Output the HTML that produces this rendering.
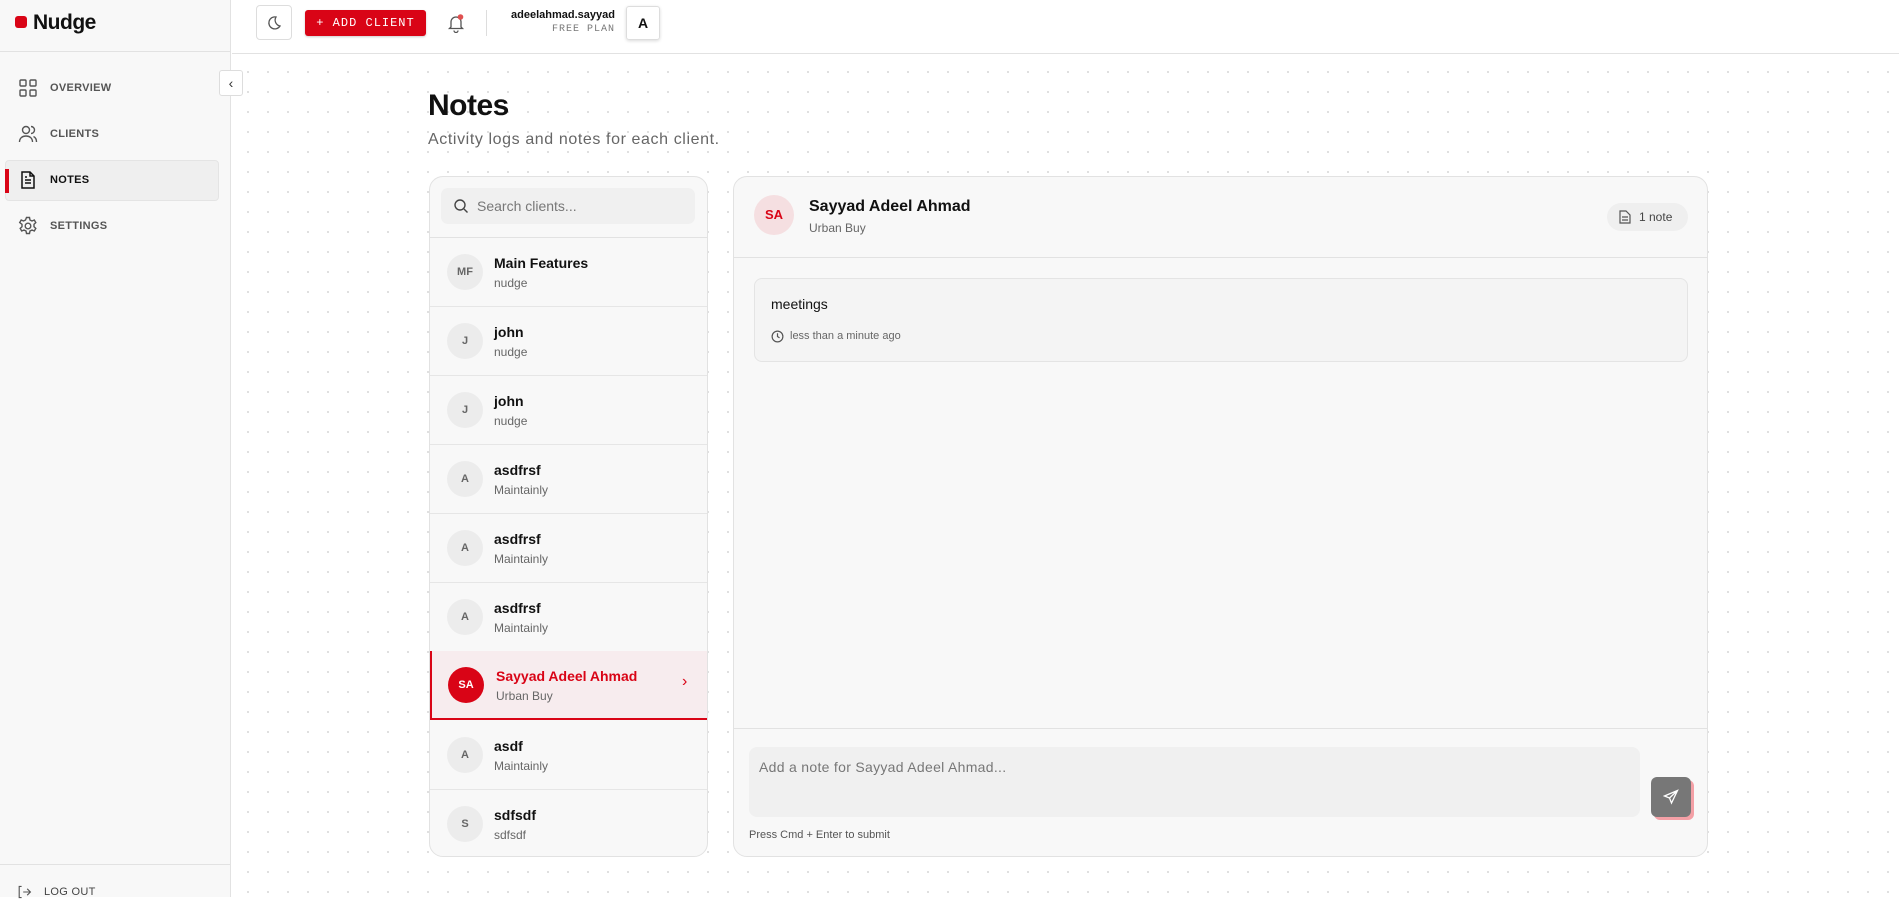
<!DOCTYPE html>
<html><head><meta charset="utf-8"><style>
*{box-sizing:border-box;margin:0;padding:0}
body{width:1899px;height:897px;overflow:hidden;font-family:"Liberation Sans",sans-serif;background:#fff;position:relative;color:#111}
.side{position:absolute;left:0;top:0;width:231px;height:897px;background:#f8f8f8;border-right:1px solid #e2e2e2}
.logo{position:absolute;left:15px;top:11px;font-size:21px;font-weight:bold;letter-spacing:-0.5px}
.logo i{display:inline-block;width:12px;height:12px;border-radius:3px;background:#d90416;margin-right:6px;vertical-align:1px}
.sdiv{position:absolute;left:0;width:231px;height:1px;background:#e2e2e2}
.nav{position:absolute;left:18px;font-size:11px;font-weight:bold;color:#555;letter-spacing:.3px;display:flex;align-items:center;gap:12px}
.nav svg{width:20px;height:20px}
.active{position:absolute;left:5px;top:160px;width:214px;height:41px;background:#efefef;border:1px solid #e4e4e4;border-radius:4px}
.active:before{content:"";position:absolute;left:-1px;top:8px;width:4px;height:24px;background:#d90416}
.main{position:absolute;left:232px;top:54px;right:0;bottom:0;background-color:#fff;background-image:radial-gradient(#d8d8d8 0.9px,transparent 1.1px);background-size:20px 20px;background-position:6px 8px}
.top{position:absolute;left:232px;top:0;right:0;height:54px;background:#fff;border-bottom:1px solid #e2e2e2}
.coll{position:absolute;left:219px;top:70px;width:24px;height:26px;background:#fff;border:1px solid #ddd;border-radius:3px;font-size:14px;text-align:center;line-height:24px;color:#333}
.panel{position:absolute;top:176px;height:681px;background:#f8f8f8;border:1px solid #e2e2e2;border-radius:14px;overflow:hidden}
.row{position:absolute;left:0;width:278px;height:69px;border-bottom:1px solid #e6e6e6}
.av{position:absolute;left:17px;top:16px;width:36px;height:36px;border-radius:50%;background:#ececec;color:#666;font-size:11px;font-weight:bold;text-align:center;line-height:36px}
.nm{position:absolute;left:64px;top:17px;font-size:14px;font-weight:bold}
.sb{position:absolute;left:64px;top:38px;font-size:12px;color:#666}
</style></head><body>
<div class="side">
<div class="logo"><i></i>Nudge</div>
<div class="sdiv" style="top:51px"></div>
<div class="active"></div>
<div class="nav" style="top:78px"><svg viewBox="0 0 20 20" fill="none" stroke="#555" stroke-width="1.4"><rect x="2" y="2" width="6" height="6" rx="1"/><rect x="12" y="2" width="6" height="6" rx="1"/><rect x="2" y="12" width="6" height="6" rx="1"/><rect x="12" y="12" width="6" height="6" rx="1"/></svg>OVERVIEW</div>
<div class="nav" style="top:124px"><svg viewBox="0 0 20 20" fill="none" stroke="#555" stroke-width="1.4"><circle cx="8" cy="6" r="3.5"/><path d="M1.5 18c0-4 3-6 6.5-6s6.5 2 6.5 6M13 2.5a3.5 3.5 0 010 7M15.5 12.5c2 1 3 3 3 5.5"/></svg>CLIENTS</div>
<div class="nav" style="top:170px;color:#111"><svg viewBox="0 0 20 20" fill="none" stroke="#111" stroke-width="1.5"><path d="M4 2h8l4 4v12H4z"/><path d="M12 2v4h4M7 10h6M7 13h6M7 7h2"/></svg>NOTES</div>
<div class="nav" style="top:216px"><svg viewBox="0 0 20 20" fill="none" stroke="#555" stroke-width="1.4"><circle cx="10" cy="10" r="2.8"/><path d="M8.5 1.5h3l.5 2.5 2 1 2.3-1 1.5 2.6-1.8 1.7v2.4l1.8 1.7-1.5 2.6-2.3-1-2 1-.5 2.5h-3l-.5-2.5-2-1-2.3 1-1.5-2.6 1.8-1.7V8.3L1.7 6.6l1.5-2.6 2.3 1 2-1z"/></svg>SETTINGS</div>
<div class="sdiv" style="top:864px"></div>
<div class="nav" style="top:884px;left:16px;font-weight:normal;color:#444"><svg viewBox="0 0 20 20" fill="none" stroke="#555" stroke-width="1.4" style="width:16px;height:16px"><path d="M7 3H4v14h3M9 10h9M14 6l4 4-4 4"/></svg>LOG OUT</div>
</div>
<div class="top">
<div style="position:absolute;left:24px;top:5px;width:36px;height:35px;border:1px solid #ddd;border-radius:4px;display:flex;align-items:center;justify-content:center"><svg width="16" height="16" viewBox="0 0 16 16" fill="none" stroke="#555" stroke-width="1.3"><path d="M10 2a6 6 0 104 9A6 6 0 0110 2z"/></svg></div>
<div style="position:absolute;left:73px;top:10px;width:121px;height:26px;background:#d90416;border-radius:3px;color:#fff;font-family:'Liberation Mono',monospace;font-size:12px;letter-spacing:1px;text-align:center;line-height:26px;box-shadow:0 1px 2px rgba(0,0,0,.2)">+ ADD CLIENT</div>
<svg style="position:absolute;left:215px;top:13px" width="18" height="20" viewBox="0 0 18 20" fill="none" stroke="#555" stroke-width="1.3"><path d="M4 14V9a5 5 0 0110 0v5l1.5 1.5h-13zM7 17.5a2 2 0 004 0"/><circle cx="13.5" cy="4" r="2.8" fill="#e05050" stroke="none"/></svg>
<div style="position:absolute;left:254px;top:10px;width:1px;height:26px;background:#ddd"></div>
<div style="position:absolute;right:1284px;top:9px;text-align:right"><div style="font-size:11px;font-weight:bold">adeelahmad.sayyad</div><div style="font-family:'Liberation Mono',monospace;font-size:10px;color:#777;letter-spacing:1px;margin-top:3px">FREE PLAN</div></div>
<div style="position:absolute;left:394px;top:6px;width:34px;height:34px;border:1px solid #ddd;border-radius:3px;text-align:center;line-height:32px;font-weight:bold;font-size:14px;box-shadow:0 1px 3px rgba(0,0,0,.15)">A</div>
</div>
<div class="main"></div>
<div class="coll">‹</div>
<div style="position:absolute;left:428px;top:89px;font-size:30px;font-weight:bold;letter-spacing:-0.5px">Notes</div>
<div style="position:absolute;left:428px;top:131px;font-size:16px;color:#666;letter-spacing:0.6px">Activity logs and notes for each client.</div>
<div class="panel" style="left:429px;width:279px">
<div style="position:absolute;left:11px;top:11px;width:254px;height:36px;background:#f0f0f0;border-radius:7px"><svg style="position:absolute;left:12px;top:10px" width="16" height="16" viewBox="0 0 16 16" fill="none" stroke="#444" stroke-width="1.4"><circle cx="7" cy="7" r="5"/><path d="M11 11l3.5 3.5"/></svg><span style="position:absolute;left:36px;top:10px;font-size:14px;color:#777">Search clients...</span></div>
<div style="position:absolute;left:0;top:60px;width:279px;height:1px;background:#e2e2e2"></div>
<div class="row" style="top:61px"><div class="av">MF</div><div class="nm">Main Features</div><div class="sb">nudge</div></div>
<div class="row" style="top:130px"><div class="av">J</div><div class="nm">john</div><div class="sb">nudge</div></div>
<div class="row" style="top:199px"><div class="av">J</div><div class="nm">john</div><div class="sb">nudge</div></div>
<div class="row" style="top:268px"><div class="av">A</div><div class="nm">asdfrsf</div><div class="sb">Maintainly</div></div>
<div class="row" style="top:337px"><div class="av">A</div><div class="nm">asdfrsf</div><div class="sb">Maintainly</div></div>
<div class="row" style="top:406px"><div class="av">A</div><div class="nm">asdfrsf</div><div class="sb">Maintainly</div></div>
<div class="row" style="top:474px;background:#f7ecee;border-left:2px solid #d90416;border-bottom:2px solid #d90416"><div class="av" style="background:#d90416;color:#fff;left:16px">SA</div><div class="nm" style="color:#d90416">Sayyad Adeel Ahmad</div><div class="sb">Urban Buy</div><div style="position:absolute;left:250px;top:22px;color:#d90416;font-size:16px">›</div></div>
<div class="row" style="top:544px"><div class="av">A</div><div class="nm">asdf</div><div class="sb">Maintainly</div></div>
<div class="row" style="top:613px;border:none"><div class="av">S</div><div class="nm">sdfsdf</div><div class="sb">sdfsdf</div></div>
</div>
<div class="panel" style="left:733px;width:975px">
<div style="position:absolute;left:20px;top:18px;width:40px;height:40px;border-radius:50%;background:#f5dfe1;color:#d90416;font-weight:bold;font-size:13px;text-align:center;line-height:40px">SA</div>
<div style="position:absolute;left:75px;top:21px;font-size:16px;font-weight:bold">Sayyad Adeel Ahmad</div>
<div style="position:absolute;left:75px;top:44px;font-size:12px;color:#666">Urban Buy</div>
<div style="position:absolute;left:873px;top:26px;width:81px;height:28px;border-radius:14px;background:#efefef;font-size:12px;color:#444;line-height:28px;padding-left:32px"><svg style="position:absolute;left:12px;top:7px" width="12" height="14" viewBox="0 0 12 14" fill="none" stroke="#555" stroke-width="1.2"><path d="M1 1h6l4 4v8H1z M3 7h6M3 10h6"/></svg>1 note</div>
<div style="position:absolute;left:0;top:80px;width:975px;height:1px;background:#e2e2e2"></div>
<div style="position:absolute;left:20px;top:101px;width:934px;height:84px;border:1px solid #e4e4e4;border-radius:8px;background:#f4f4f4">
<div style="position:absolute;left:16px;top:17px;font-size:14px">meetings</div>
<svg style="position:absolute;left:16px;top:51px" width="13" height="13" viewBox="0 0 14 14" fill="none" stroke="#555" stroke-width="1.3"><circle cx="7" cy="7" r="5.8"/><path d="M7 3.5V7l2.2 1.5"/></svg>
<div style="position:absolute;left:35px;top:51px;font-size:11px;color:#666">less than a minute ago</div></div>
<div style="position:absolute;left:0;top:551px;width:975px;height:1px;background:#e2e2e2"></div>
<div style="position:absolute;left:15px;top:570px;width:891px;height:70px;border-radius:8px;background:#f0f0f0"><span style="position:absolute;left:10px;top:12px;font-size:14px;color:#777;letter-spacing:0.3px">Add a note for Sayyad Adeel Ahmad...</span></div>
<div style="position:absolute;left:920px;top:603px;width:40px;height:40px;border-radius:6px;background:#f4a0a6"></div>
<div style="position:absolute;left:917px;top:600px;width:40px;height:40px;border-radius:6px;background:#777;display:flex;align-items:center;justify-content:center"><svg width="16" height="16" viewBox="0 0 16 16" fill="none" stroke="#fff" stroke-width="1.3"><path d="M14.5 1.5L1.5 7l5 2 2 5z M6.5 9l8-7.5"/></svg></div>
<div style="position:absolute;left:15px;top:652px;font-size:11px;color:#555">Press Cmd + Enter to submit</div>
</div>
</body></html>
